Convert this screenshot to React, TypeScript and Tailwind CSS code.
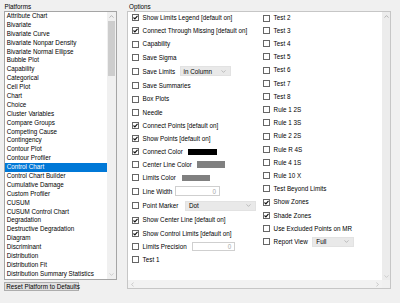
import React from "react";

const platforms = [
  "Attribute Chart",
  "Bivariate",
  "Bivariate Curve",
  "Bivariate Nonpar Density",
  "Bivariate Normal Ellipse",
  "Bubble Plot",
  "Capability",
  "Categorical",
  "Cell Plot",
  "Chart",
  "Choice",
  "Cluster Variables",
  "Compare Groups",
  "Competing Cause",
  "Contingency",
  "Contour Plot",
  "Contour Profiler",
  "Control Chart",
  "Control Chart Builder",
  "Cumulative Damage",
  "Custom Profiler",
  "CUSUM",
  "CUSUM Control Chart",
  "Degradation",
  "Destructive Degradation",
  "Diagram",
  "Discriminant",
  "Distribution",
  "Distribution Fit",
  "Distribution Summary Statistics",
];

type Row = {
  l: string;
  c?: boolean;
  h: string;
  extra?: React.ReactNode;
  lw?: string;
};

function Check({ on }: { on?: boolean }) {
  return (
    <span className="w-[7px] h-[7px] shrink-0 border border-[#666666] bg-white flex items-center justify-center">
      {on && (
        <svg width="5" height="5" viewBox="0 0 5 5">
          <path d="M0.5 2.5 L1.9 3.9 L4.5 0.8" fill="none" stroke="#111111" strokeWidth="1.1" />
        </svg>
      )}
    </span>
  );
}

function Up() {
  return (
    <svg width="5" height="3" viewBox="0 0 5 3">
      <path d="M0.5 2.6 L2.5 0.6 L4.5 2.6" fill="none" stroke="#a6a6a6" strokeWidth="0.8" />
    </svg>
  );
}
function Down({ c = "#a6a6a6" }: { c?: string }) {
  return (
    <svg width="5" height="3" viewBox="0 0 5 3">
      <path d="M0.5 0.4 L2.5 2.4 L4.5 0.4" fill="none" stroke={c} strokeWidth="0.8" />
    </svg>
  );
}
function Left() {
  return (
    <svg width="3" height="5" viewBox="0 0 3 5">
      <path d="M2.6 0.5 L0.6 2.5 L2.6 4.5" fill="none" stroke="#c0c0c0" strokeWidth="0.8" />
    </svg>
  );
}
function Right() {
  return (
    <svg width="3" height="5" viewBox="0 0 3 5">
      <path d="M0.4 0.5 L2.4 2.5 L0.4 4.5" fill="none" stroke="#c0c0c0" strokeWidth="0.8" />
    </svg>
  );
}

function Combo({ text, w }: { text: string; w: string }) {
  return (
    <span className={`${w} h-[10px] bg-[#e9e9e9] border border-[#e2e2e2] flex items-center justify-between pl-[3px] pr-[4px]`}>
      <span>{text}</span>
      <Down c="#b0b0b0" />
    </span>
  );
}

function NumBox({ w }: { w: string }) {
  return (
    <span className={`${w} h-[9.5px] bg-white border border-[#cfcfcf] flex items-center justify-end pr-[3px] text-[#a8a8a8]`}>
      0
    </span>
  );
}

const leftRows: Row[] = [
  { l: "Show Limits Legend [default on]", c: true, h: "h-[11.85px]" },
  { l: "Connect Through Missing [default on]", c: true, h: "h-[13.65px]" },
  { l: "Capability", h: "h-[13.15px]" },
  { l: "Save Sigma", h: "h-[13.65px]" },
  {
    l: "Save Limits",
    h: "h-[14.35px]",
    lw: "w-[37px]",
    extra: <Combo text="in Column" w="w-[51px]" />,
  },
  { l: "Save Summaries", h: "h-[13.85px]" },
  { l: "Box Plots", h: "h-[13.35px]" },
  { l: "Needle", h: "h-[13.35px]" },
  { l: "Connect Points [default on]", c: true, h: "h-[13.15px]" },
  { l: "Show Points [default on]", c: true, h: "h-[13.15px]" },
  {
    l: "Connect Color",
    c: true,
    h: "h-[12.65px]",
    lw: "w-[45.7px]",
    extra: <span className="w-[29px] h-[6px] bg-black" />,
  },
  {
    l: "Center Line Color",
    h: "h-[13.15px]",
    lw: "w-[54px]",
    extra: <span className="w-[28px] h-[6.5px] bg-[#808080]" />,
  },
  {
    l: "Limits Color",
    h: "h-[13.2px]",
    lw: "w-[39.7px]",
    extra: <span className="w-[27.6px] h-[6.3px] bg-[#808080]" />,
  },
  {
    l: "Line Width",
    h: "h-[13.7px]",
    lw: "w-[32.3px]",
    extra: <NumBox w="w-[45px]" />,
  },
  {
    l: "Point Marker",
    h: "h-[15px]",
    lw: "w-[42.3px]",
    extra: <Combo text="Dot" w="w-[71px]" />,
  },
  { l: "Show Center Line [default on]", c: true, h: "h-[14px]" },
  { l: "Show Control Limits [default on]", c: true, h: "h-[13px]" },
  {
    l: "Limits Precision",
    h: "h-[13.15px]",
    lw: "w-[49.7px]",
    extra: <NumBox w="w-[43px]" />,
  },
  { l: "Test 1", h: "h-[13.3px]" },
];

const rightRows: Row[] = [
  { l: "Test 2", h: "h-[12px]" },
  { l: "Test 3", h: "h-[13.2px]" },
  { l: "Test 4", h: "h-[13.2px]" },
  { l: "Test 5", h: "h-[13.2px]" },
  { l: "Test 6", h: "h-[13.2px]" },
  { l: "Test 7", h: "h-[13.2px]" },
  { l: "Test 8", h: "h-[13.2px]" },
  { l: "Rule 1 2S", h: "h-[13.2px]" },
  { l: "Rule 1 3S", h: "h-[13.2px]" },
  { l: "Rule 2 2S", h: "h-[13.2px]" },
  { l: "Rule R 4S", h: "h-[13.2px]" },
  { l: "Rule 4 1S", h: "h-[13.2px]" },
  { l: "Rule 10 X", h: "h-[13.2px]" },
  { l: "Test Beyond Limits", h: "h-[13.2px]" },
  { l: "Show Zones", c: true, h: "h-[13.2px]" },
  { l: "Shade Zones", c: true, h: "h-[13.2px]" },
  { l: "Use Excluded Points on MR", h: "h-[13.2px]" },
  {
    l: "Report View",
    h: "h-[13.2px]",
    lw: "w-[38.7px]",
    extra: <Combo text="Full" w="w-[41.6px]" />,
  },
];

function OptRow({ r }: { r: Row }) {
  return (
    <div className={`${r.h} shrink-0 flex items-center whitespace-nowrap`}>
      <Check on={r.c} />
      <span className={`ml-[3.3px] ${r.lw ?? ""} shrink-0`}>{r.l}</span>
      {r.extra}
    </div>
  );
}

export default function App() {
  return (
    <div className="w-[400px] h-[303px] bg-[#f0f0f0] overflow-hidden flex text-[6.3px] text-black font-['Liberation_Sans',Arial,sans-serif]">
      {/* Platforms */}
      <div className="flex flex-col pl-[4px] w-[117px] shrink-0">
        <div className="h-[11px] pt-[1.5px] leading-[9px] pl-[0.5px]">Platforms</div>
        <div className="w-[113px] h-[269px] border border-[#a5a5a5] bg-white flex">
          <div className="flex-1 flex flex-col">
            {platforms.map((p) => (
              <div
                key={p}
                className={`h-[8.9px] leading-[8.9px] pl-[1.7px] whitespace-nowrap shrink-0 ${
                  p === "Control Chart" ? "bg-[#0078d7] text-white" : ""
                }`}
              >
                {p}
              </div>
            ))}
          </div>
          <div className="w-[9px] bg-[#f0f0f0] flex flex-col items-center">
            <div className="h-[8.5px] flex items-center justify-center shrink-0">
              <Up />
            </div>
            <div className="w-[7px] h-[55px] bg-[#cdcdcd] shrink-0" />
            <div className="flex-1" />
            <div className="h-[8.5px] flex items-center justify-center shrink-0">
              <Down c="#c4c4c4" />
            </div>
          </div>
        </div>
        <div className="mt-[2px] w-[75px] h-[9px] bg-[#e1e1e1] border border-[#adadad] leading-[7px] pl-[1.3px] whitespace-nowrap">
          Reset Platform to Defaults
        </div>
      </div>

      {/* Options */}
      <div className="flex flex-col ml-[10px]">
        <div className="h-[11px] pt-[1.5px] leading-[9px] pl-[2px]">Options</div>
        <div className="w-[264px] h-[278px] border border-[#c6c6c6] bg-white flex flex-col">
          <div className="flex flex-1 min-h-0">
            <div className="flex-1 flex overflow-hidden">
              <div className="w-[130px] shrink-0 flex flex-col pl-[4.3px]">
                {leftRows.map((r) => (
                  <OptRow key={r.l} r={r} />
                ))}
              </div>
              <div className="flex-1 flex flex-col pl-[5.3px]">
                {rightRows.map((r) => (
                  <OptRow key={r.l} r={r} />
                ))}
              </div>
            </div>
            <div className="w-[8px] bg-[#ececec] flex flex-col items-center">
              <div className="h-[8px] flex items-center justify-center">
                <Up />
              </div>
              <div className="flex-1" />
              <div className="h-[8px] flex items-center justify-center">
                <Down c="#c4c4c4" />
              </div>
            </div>
          </div>
          <div className="h-[8px] flex">
            <div className="flex-1 bg-[#f2f2f2] flex items-center justify-between px-[3px]">
              <Left />
              <Right />
            </div>
            <div className="w-[8px] bg-[#f0f0f0]" />
          </div>
        </div>
      </div>
    </div>
  );
}
